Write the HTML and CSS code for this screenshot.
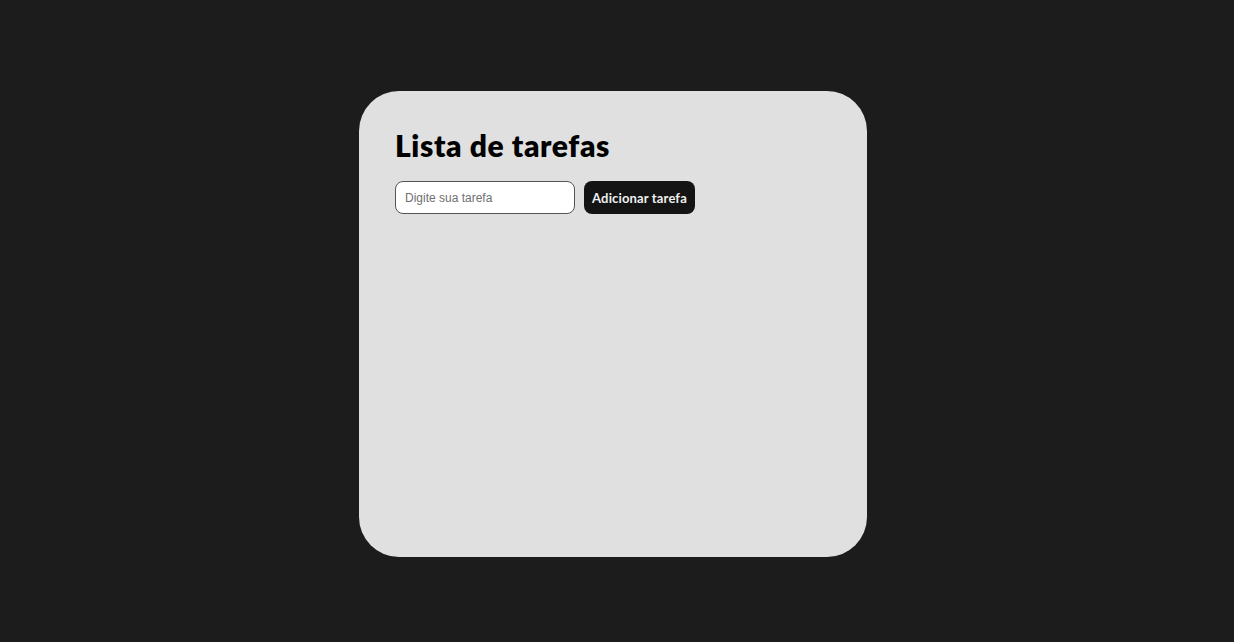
FILE: index.html
```html
<!DOCTYPE html>
<html lang="pt-BR">
<head>
<meta charset="utf-8">
<title>Lista de tarefas</title>
<link rel="stylesheet" href="styles.css">
</head>
<body>
<main class="page">
  <section class="card">
    <h1 class="title">Lista de tarefas</h1>
    <form class="add-form">
      <input class="task-input" type="text" placeholder="Digite sua tarefa">
      <button class="add-btn" type="button">Adicionar tarefa</button>
    </form>
    <ul class="task-list"></ul>
  </section>
</main>
</body>
</html>
```
FILE: styles.css
```css
html, body {
  margin: 0;
  padding: 0;
  height: 100%;
  background: #1c1c1c;
}
.page {
  display: flex;
  align-items: flex-start;
  padding: 91px 0 0 359px;
  box-sizing: border-box;
  height: 100%;
}
.card {
  width: 508px;
  height: 466px;
  box-sizing: border-box;
  background: #e0e0e0;
  border-radius: 40px;
  padding: 36px 36px;
  display: flex;
  flex-direction: column;
}
.title {
  margin: 0;
  font-family: "Lato", "Noto Sans", sans-serif;
  font-weight: 800;
  font-size: 30px;
  line-height: 1.2;
  color: #000;
  letter-spacing: 0.6px;
}
.add-form {
  margin-top: 18px;
  display: flex;
  gap: 9px;
}
.task-input {
  width: 180px;
  height: 33px;
  box-sizing: border-box;
  border: 1px solid #555;
  border-radius: 8px;
  padding: 0 9px;
  background: #fff;
  font-family: "Liberation Sans", Arial, sans-serif;
  font-size: 12px;
  color: #000;
  outline: none;
}
.task-input::placeholder {
  color: #707070;
}
.add-btn {
  height: 33px;
  width: 111px;
  box-sizing: border-box;
  border: none;
  border-radius: 8px;
  background: #141414;
  color: #f0f0f0;
  font-family: "Lato", "Noto Sans", sans-serif;
  font-weight: 700;
  font-size: 13px;
  letter-spacing: 0.15px;
  padding: 0;
  cursor: pointer;
}
.task-list {
  margin: 0;
  padding: 0;
  list-style: none;
}
```
